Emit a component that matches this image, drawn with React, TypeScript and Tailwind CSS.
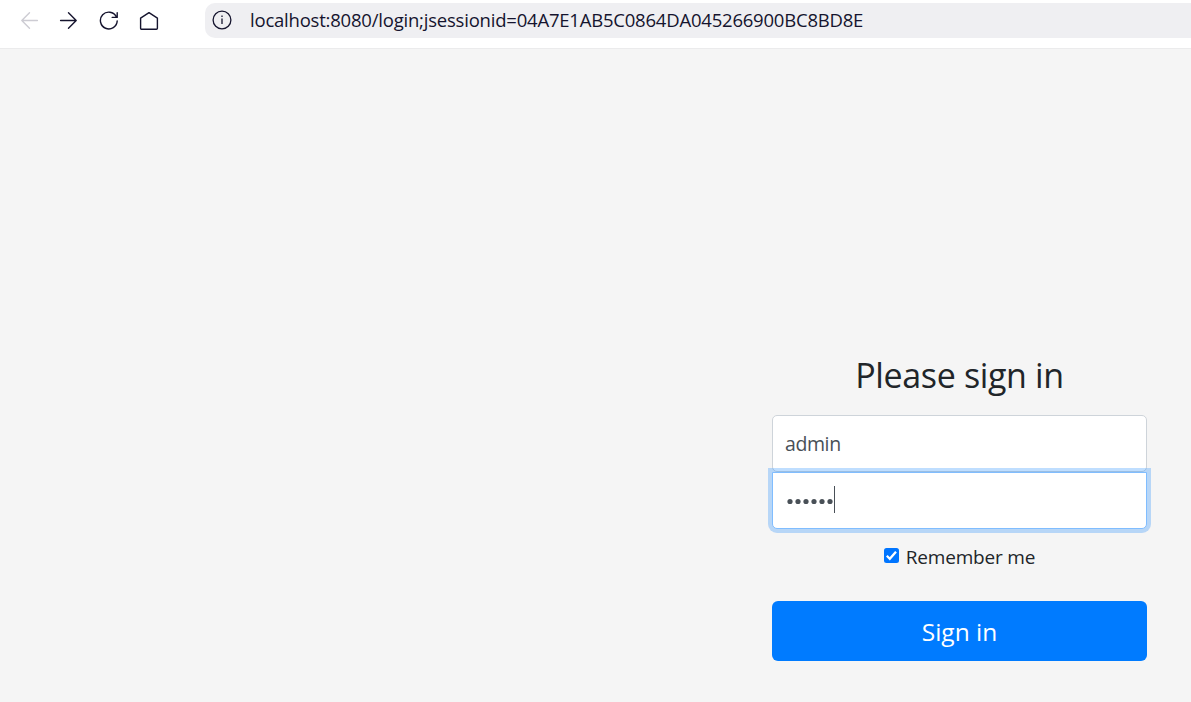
import type { ReactNode } from "react";

function NavIcon(props: { label: string; className: string; children: ReactNode }) {
  return (
    <button aria-label={props.label} className={props.className}>
      <svg
        width="20"
        height="20"
        viewBox="0 0 20 20"
        fill="none"
        stroke="currentColor"
        strokeWidth="1.4"
        strokeLinecap="round"
        strokeLinejoin="round"
      >
        {props.children}
      </svg>
    </button>
  );
}

function BrowserBar() {
  return (
    <header className="flex h-[49px] shrink-0 border-b border-[#ebebec] bg-white pt-[3px] text-[#15142e]">
      <nav className="flex h-[35px] w-[205px] shrink-0 items-center gap-5 pl-[19px]">
        <NavIcon label="Back" className="text-[#cdccd3]">
          <path d="M18.4 9.5H2.8M10.5 1.7 2.8 9.5l7.7 7.8" />
        </NavIcon>
        <NavIcon label="Forward" className="text-[#15142e]">
          <path d="M1.6 9.5h15.2M9.5 1.7l7.7 7.8-7.7 7.8" />
        </NavIcon>
        <NavIcon label="Reload" className="text-[#15142e]">
          <path d="M18.2 9.9A8.4 8.4 0 1 1 17.3 5.7M18.2 1.8v4.6h-5" />
        </NavIcon>
        <NavIcon label="Home" className="text-[#15142e]">
          <path d="M1.6 7.1 10 1.6l8.4 5.5v10.2a1 1 0 0 1-1 1H2.6a1 1 0 0 1-1-1Z" />
        </NavIcon>
      </nav>
      <div className="flex h-[35px] flex-1 items-center rounded-l-[10px] bg-[#efeff2] pl-[7px]">
        <svg className="-mt-px" width="20" height="20" viewBox="0 0 20 20" fill="none" stroke="currentColor" strokeWidth="1.3">
          <circle cx="10" cy="10" r="8.9" />
          <path d="M10 8.6v5.4M10 5.6v1.3" />
        </svg>
        <span className="ml-[18px] pb-[2px] text-[18.5px] leading-[33px] tracking-[-0.21px] whitespace-nowrap">
          localhost:8080/login;jsessionid=04A7E1AB5C0864DA045266900BC8BD8E
        </span>
      </div>
    </header>
  );
}

function SignInForm() {
  return (
    <form className="ml-[772px] flex w-[375px] flex-col items-center pt-[303px]">
      <h1 className="h-[46px] text-[34px] leading-[46px] tracking-[-0.35px] whitespace-nowrap">
        Please sign in
      </h1>
      <div className="mt-[17px] flex h-[57px] w-full items-center rounded-[5px] border border-[#ced4da] bg-white px-[12px] text-[19.5px] tracking-[-0.4px] text-[#495057]">
        <span>admin</span>
      </div>
      <div className="relative flex h-[57px] w-full items-center rounded-b-[5px] border border-[#80bdff] bg-white px-[13px] pb-[2px] shadow-[0_0_0_4px_rgba(0,123,255,0.25)]">
        <svg className="mt-[3px]" width="48" height="8" viewBox="0 0 48 8" fill="#495057">
          <circle cx="4" cy="4.5" r="2.6" />
          <circle cx="12" cy="4.5" r="2.6" />
          <circle cx="20" cy="4.5" r="2.6" />
          <circle cx="28" cy="4.5" r="2.6" />
          <circle cx="36" cy="4.5" r="2.6" />
          <circle cx="44" cy="4.5" r="2.6" />
        </svg>
        <span className="h-[27px] w-px bg-[#495057]" />
      </div>
      <label className="mt-[13px] flex h-[30px] items-center gap-[7px] text-[19px] leading-[30px] tracking-[-0.2px] whitespace-nowrap">
        <svg className="-mt-[3px]" width="15" height="15" viewBox="0 0 15 15">
          <rect width="15" height="15" rx="2.5" fill="#0075ff" />
          <path d="m2.8 7.8 3 3 6.2-7.1" fill="none" stroke="#fff" strokeWidth="2.3" />
        </svg>
        <span>Remember me</span>
      </label>
      <button className="mt-[29px] h-[60px] w-full rounded-[6px] bg-[#007bff] pt-[2px] text-[24.5px] text-white">
        Sign in
      </button>
    </form>
  );
}

export default function App() {
  return (
    <div className="flex h-[702px] w-[1191px] flex-col overflow-hidden bg-[#f5f5f5] font-['Open_Sans','Noto_Sans',sans-serif] text-[#212529]">
      <BrowserBar />
      <SignInForm />
    </div>
  );
}
